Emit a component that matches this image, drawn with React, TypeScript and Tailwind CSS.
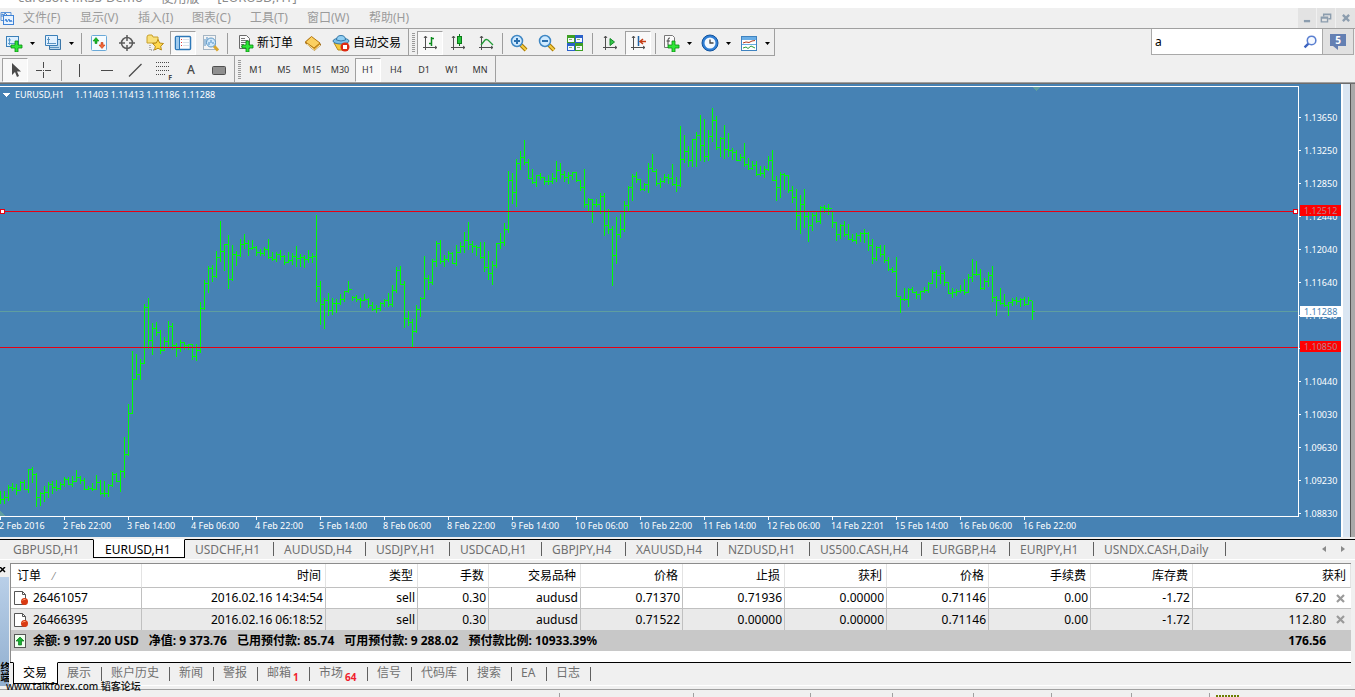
import type { ReactNode } from 'react';
import clsx from 'clsx';

// high, low, close of every bar, as y positions counted from the top of the window
const bars = `491,504,499 491,504,497 485,501,487 483,491,488 484,495,490 481,491,482 480,490,489 469,493,469 467,483,474 473,507,497
492,506,493 486,502,492 482,498,484 481,494,487 480,491,488 482,490,484 477,487,479 477,485,484 476,487,481 470,482,477
476,484,480 478,490,489 486,490,488 483,491,489 475,490,482 480,495,493 481,497,493 484,497,485 472,487,474 473,482,481
470,492,471 437,478,454 404,456,413 351,414,379 354,380,374 359,380,363 304,364,307 298,349,340 323,355,328 322,336,332
330,354,350 337,351,341 321,347,326 323,350,345 343,357,348 340,352,342 342,350,345 344,350,344 344,360,356 344,361,350
302,353,308 280,310,283 266,293,268 265,282,276 251,278,257 221,262,251 244,271,244 235,289,279 245,281,254 251,266,255
239,257,244 234,249,243 240,256,248 240,250,247 246,256,252 249,256,253 247,256,249 239,259,257 252,261,259 252,262,254
250,260,256 255,265,262 252,263,260 253,265,256 246,267,258 254,267,257 255,268,259 250,263,257 253,263,256 215,302,286
281,325,304 298,329,300 293,316,310 298,315,303 299,313,303 294,305,299 291,302,291 281,293,289 296,301,297 295,302,299
298,308,300 294,301,299 298,308,305 302,311,309 305,313,308 302,311,303 299,307,300 293,307,304 285,307,290 267,293,270
266,285,284 281,328,318 311,326,322 319,347,331 305,333,309 297,317,298 256,299,278 275,290,282 259,285,261 241,267,243
240,264,261 255,267,259 251,262,253 252,264,263 245,266,252 242,253,246 232,253,240 222,250,244 241,253,246 245,256,247
242,259,257 242,272,267 251,280,273 261,285,265 243,268,243 233,249,242 223,246,229 171,233,180 173,204,192 159,207,163
151,170,157 140,165,162 159,179,178 169,184,182 175,187,175 173,180,177 177,185,181 175,185,181 173,184,178 161,182,170
163,179,174 171,182,177 172,184,175 172,180,172 172,182,180 180,191,187 169,208,204 198,211,199 199,223,204 199,207,204
193,214,196 193,236,225 209,234,229 226,286,255 217,264,234 214,238,229 201,232,205 186,211,187 174,201,176 172,183,179
179,191,189 183,191,184 163,193,168 154,172,171 169,186,183 178,188,181 174,183,177 174,184,178 164,186,184 177,192,185
126,187,159 135,163,151 146,167,160 139,167,139 132,167,135 115,161,145 119,162,156 130,161,136 108,142,120 116,150,147
137,157,138 125,159,149 133,157,150 148,160,152 150,161,160 154,161,157 143,167,164 158,170,168 161,170,165 161,176,174
166,176,173 166,178,169 156,171,160 150,181,180 176,201,187 172,198,174 173,190,175 175,193,190 186,203,197 189,230,215
195,234,204 189,228,216 211,242,225 213,231,215 212,223,221 206,224,207 205,213,208 204,215,208 212,228,222 222,241,234
224,239,225 221,237,234 224,240,239 234,242,240 233,244,235 232,242,233 229,243,233 232,251,245 239,264,258 246,261,247
245,257,254 245,263,260 257,271,269 267,273,271 257,297,296 296,313,299 288,301,299 288,307,289 287,293,292 291,299,294
291,300,291 287,293,290 282,293,283 270,284,272 270,288,275 266,284,273 271,286,282 282,294,293 288,298,292 289,296,291
285,293,290 279,295,292 274,293,277 259,282,274 261,276,274 269,290,288 278,290,281 272,287,275 266,302,297 296,316,300
288,305,303 294,307,305 302,316,302 298,306,300 297,305,301 298,307,299 297,306,304 297,305,300 301,320,311`
  .split(/\s+/)
  .map((b) => b.split(',').map(Number));

const barPath = bars
  .map(([high, low, close], i) => {
    const x = i * 4;
    const open = i > 0 ? bars[i - 1][2] : close;
    return `M${x} ${high}h1V${low}h-1zM${x + 1} ${close}h2v1h-2zM${x - 1} ${open}h1v1h-1z`;
  })
  .join('');

const dates = [
  '2 Feb 2016', '2 Feb 22:00', '3 Feb 14:00', '4 Feb 06:00', '4 Feb 22:00', '5 Feb 14:00',
  '8 Feb 06:00', '8 Feb 22:00', '9 Feb 14:00', '10 Feb 06:00', '10 Feb 22:00', '11 Feb 14:00',
  '12 Feb 06:00', '14 Feb 22:01', '15 Feb 14:00', '16 Feb 06:00', '16 Feb 22:00',
];

const prices = [
  '1.13650', '1.13250', '1.12850', '1.12440', '1.12040', '1.11640', '1.11240',
  '', '1.10440', '1.10030', '1.09630', '1.09230', '1.08830',
];

const menus = ['文件(F)', '显示(V)', '插入(I)', '图表(C)', '工具(T)', '窗口(W)', '帮助(H)'];
const menuWidths = ['w-[57px]', 'w-[58px]', 'w-[54px]', 'w-[58px]', 'w-[57px]', 'w-[62px]', 'w-[60px]'];
const periods = ['M1', 'M5', 'M15', 'M30', 'H1', 'H4', 'D1', 'W1', 'MN'];

const chartTabs = [
  ['GBPUSD,H1', 'w-[93px]'],
  ['EURUSD,H1', 'w-[92px]'],
  ['USDCHF,H1', 'w-[89px]'],
  ['AUDUSD,H4', 'w-[92px]'],
  ['USDJPY,H1', 'w-[84px]'],
  ['USDCAD,H1', 'w-[92px]'],
  ['GBPJPY,H4', 'w-[84px]'],
  ['XAUUSD,H4', 'w-[92px]'],
  ['NZDUSD,H1', 'w-[92px]'],
  ['US500.CASH,H4', 'w-[112px]'],
  ['EURGBP,H4', 'w-[88px]'],
  ['EURJPY,H1', 'w-[84px]'],
  ['USNDX.CASH,Daily', 'w-[132px]'],
];

const terminalTabs: [string, string, string?][] = [
  ['交易', 'w-[45px]'],
  ['展示', 'w-[44px]'],
  ['账户历史', 'w-[68px]'],
  ['新闻', 'w-[44px]'],
  ['警报', 'w-[44px]'],
  ['邮箱', 'w-[52px]', '1'],
  ['市场', 'w-[58px]', '64'],
  ['信号', 'w-[44px]'],
  ['代码库', 'w-[56px]'],
  ['搜索', 'w-[44px]'],
  ['EA', 'w-[35px]'],
  ['日志', 'w-[44px]'],
];

const columns = [
  ['订单', 'w-[131px]'],
  ['时间', 'w-[184px]'],
  ['类型', 'w-[92px]'],
  ['手数', 'w-[71px]'],
  ['交易品种', 'w-[92px]'],
  ['价格', 'w-[102px]'],
  ['止损', 'w-[102px]'],
  ['获利', 'w-[102px]'],
  ['价格', 'w-[102px]'],
  ['手续费', 'w-[102px]'],
  ['库存费', 'w-[102px]'],
  ['获利', ''],
];

const orders = [
  ['26461057', '2016.02.16 14:34:54', 'sell', '0.30', 'audusd', '0.71370', '0.71936', '0.00000', '0.71146', '0.00', '-1.72', '67.20'],
  ['26466395', '2016.02.16 06:18:52', 'sell', '0.30', 'audusd', '0.71522', '0.00000', '0.00000', '0.71146', '0.00', '-1.72', '112.80'],
];

const statusCells = ['w-[560px]', 'w-[134px]', 'w-[117px]', 'w-[82px]', 'w-[81px]', 'w-[78px]', 'w-[80px]', 'w-[78px]'];

const pressed = 'border border-[#a0a0a0] border-r-white border-b-white bg-[#f8f8f8]';

function Svg({ children, size = 18 }: { children: ReactNode; size?: number }) {
  return (
    <svg width={size} height={size} viewBox="0 0 18 18" fill="none" className="shrink-0" aria-hidden="true">
      {children}
    </svg>
  );
}

function ToolButton({ label, active, children }: { label: string; active?: boolean; children: ReactNode }) {
  return (
    <button type="button" aria-label={label} className="flex h-6 w-7 shrink-0 items-center justify-center">
      <span className={clsx('flex h-6 w-[26px] items-center justify-center', active && pressed)}>{children}</span>
    </button>
  );
}

function DropButton({ label, children }: { label: string; children: ReactNode }) {
  return (
    <button type="button" aria-label={label} className="flex h-6 shrink-0 items-center">
      <span className="flex w-6 justify-center">{children}</span>
      <span className="flex w-3 justify-center">
        <svg width="5" height="3" viewBox="0 0 5 3"><path d="M0 0h5L2.5 3z" fill="#000" /></svg>
      </span>
    </button>
  );
}

function Separator({ narrow }: { narrow?: boolean }) {
  return <div className={clsx('h-[21px] w-px shrink-0 bg-[#9d9d9d]', narrow ? 'mx-[2px]' : 'mx-[3px]')} />;
}

function Grip() {
  return (
    <svg width="3" height="20" className="shrink-0" aria-hidden="true">
      {[0, 2, 4, 6, 8, 10, 12, 14, 16, 18].map((y) => (
        <rect key={y} y={y} width="3" height="1" fill="#9a9a9a" />
      ))}
    </svg>
  );
}

const axes = <path d="M4.5 2v14M2 13.5h14M3 4l1.5-2L6 4M14 12l2 1.500-2 1.500" stroke="#4f4f4f" />;
const plus = <path d="M10 7h3v4h4v3h-4v4h-3v-4H6v-3h4z" fill="#2fe637" stroke="#078a10" strokeWidth=".8" />;

function Lens({ sign }: { sign: string }) {
  return (
    <Svg>
      <path d="M11 11l5 5" stroke="#a97900" strokeWidth="4" />
      <path d="M11 11l5 5" stroke="#f6cf45" strokeWidth="2" />
      <circle cx="7" cy="7" r="5.500" fill="#cfeaff" stroke="#3f87c4" strokeWidth="1.500" />
      <path d={sign} stroke="#2a6fae" strokeWidth="2" />
    </Svg>
  );
}

function MenuBar() {
  return (
    <header>
      <div className="flex h-2 items-end overflow-hidden bg-white pb-1 pl-[18px] text-[13px] leading-[13px] text-[#8a8a8a]">
        <h1 className="whitespace-pre">curosoft4.RSS-Demo  -  使用版  -  [EURUSD,H1]</h1>
      </div>
      <div className="flex h-5 items-center">
        <svg width="15" height="15" viewBox="0 0 15 15" fill="none" className="mr-2 shrink-0" aria-hidden="true">
          <path d="M1 1.500h10v3M1 1.500v8h2" stroke="#5b93d8" />
          <rect x="3.500" y="4.500" width="10" height="9" fill="#e8f3ff" stroke="#3f83d6" />
          <path d="M2 6V3l2 1 1-2 2 2M5 10l1-2 1 3 2-3 1 3 1-2 1 2" stroke="#3f83d6" />
        </svg>
        <nav className="flex flex-1">
          {menus.map((menu, i) => (
            <button key={menu} type="button" className={clsx('h-5 text-left text-[12px] leading-5 text-[#9b9b9b]', menuWidths[i])}>
              {menu}
            </button>
          ))}
        </nav>
        <div className="flex gap-px">
          <button type="button" aria-label="最小化" className="flex h-5 w-[18px] items-center justify-center bg-[#e3e3e3]">
            <Svg size={14}><path d="M5 13h8" stroke="#8c9dae" strokeWidth="3" /></Svg>
          </button>
          <button type="button" aria-label="还原" className="flex h-5 w-[18px] items-center justify-center bg-[#e3e3e3]">
            <Svg size={14}>
              <path d="M6 7V4h9v6h-3M6 4.500h9" stroke="#8c9dae" strokeWidth="1.800" />
              <path d="M3 8h8v6H3zM3 9h8" stroke="#8c9dae" strokeWidth="1.800" />
            </Svg>
          </button>
          <button type="button" aria-label="关闭" className="flex h-5 w-[19px] items-center justify-center bg-[#e3e3e3]">
            <Svg size={14}><path d="M5 5l8 8M13 5l-8 8" stroke="#8c9dae" strokeWidth="3" /></Svg>
          </button>
        </div>
      </div>
    </header>
  );
}

function MainToolbar() {
  return (
    <div className="flex h-7 items-start border-t border-[#a0a0a0]">
      <div className="flex h-[27px] items-center border-r border-b border-[#a0a0a0] pt-[2px] pr-[2px] pl-[2px]">
        <div className="mr-px flex gap-[3px]">
          <DropButton label="新图表">
            <Svg>
              <rect x="1.500" y="2.500" width="12" height="10" fill="#dcefff" stroke="#3b7fb8" />
              <path d="M4.500 4v7M3 6h3M3 9.500h9" stroke="#5b9bcc" />
              {plus}
            </Svg>
          </DropButton>
          <DropButton label="图表组合">
            <Svg>
              <path d="M5.500 5.500h11v10h-11z" fill="#bcd9ef" stroke="#3b76a8" />
              <path d="M1.500 1.500h12v10h-12z" fill="#e2f1ff" stroke="#3b7fb8" />
              <path d="M4.500 3v6M3 9.500h9M3 5.500h3M6 13.500h9" stroke="#5b93c0" />
            </Svg>
          </DropButton>
        </div>
        <Separator />
        <ToolButton label="市场报价">
          <Svg>
            <rect x="1.500" y="1.500" width="15" height="15" rx="1" fill="#f5fbff" stroke="#6aa9d8" />
            <path d="M7 9.500V7h2L6 3.500 3 7h2v2.500z" fill="#18b827" stroke="#0b8b18" strokeWidth=".6" />
            <path d="M11 8.500V11H9l3 3.500L15 11h-2V8.500z" fill="#f0693a" stroke="#c9380b" strokeWidth=".6" />
          </Svg>
        </ToolButton>
        <ToolButton label="数据窗口">
          <Svg>
            <circle cx="9" cy="9" r="5.500" stroke="#5a5a5a" strokeWidth="1.500" />
            <path d="M9 1v6M9 11v6M1 9h6M11 9h6" stroke="#5a5a5a" strokeWidth="1.500" />
          </Svg>
        </ToolButton>
        <ToolButton label="导航">
          <Svg>
            <path d="M1 3q0-2 2-2h3l1 2h5v6H1z" fill="#f9e07a" stroke="#c8a02c" />
            <path d="M4 11v5h4" stroke="#777" strokeDasharray="1 1" />
            <path d="M12 5.500l1.700 3.500 3.800.5-2.800 2.700.7 3.800-3.400-1.800L8.600 16l.7-3.800-2.800-2.700 3.800-.5z" fill="#ffd94e" stroke="#b98b16" />
          </Svg>
        </ToolButton>
        <ToolButton label="终端" active>
          <Svg>
            <rect x="1.500" y="2.500" width="15" height="13" rx="1" fill="#fff" stroke="#2e78b8" strokeWidth="1.500" />
            <path d="M2 3h3v12H2z" fill="#9fcbee" />
            <path d="M5.500 3v12" stroke="#2e78b8" />
            <path d="M7 5.500h1M7 8.500h1M7 11.500h1" stroke="#e03c3c" />
            <path d="M9 5.500h6M9 8.500h6M9 11.500h6" stroke="#d8e2ea" />
          </Svg>
        </ToolButton>
        <ToolButton label="策略测试">
          <Svg>
            <rect x="1.500" y="1.500" width="12" height="14" fill="#f4f4f4" stroke="#a5b5c3" />
            <path d="M3 5v7M5 3v7M7 5v7" stroke="#4c8dc5" />
            <path d="M12 12l4 4.500" stroke="#d8a62e" strokeWidth="3" />
            <circle cx="9" cy="8.500" r="4.500" fill="#cfe8fb" stroke="#5d97c4" />
            <path d="M7 8v3M9 6v3M11 8v2" stroke="#4c8dc5" />
          </Svg>
        </ToolButton>
        <Separator narrow />
        <button type="button" className="flex h-6 w-[69px] shrink-0 items-center pl-[3px] text-[12px] leading-6 whitespace-nowrap">
          <span className="flex w-6 shrink-0 justify-center">
            <Svg>
              <path d="M3.500 1.500h7l3 3v10h-10z" fill="#fafafa" stroke="#6a6a6a" />
              <path d="M5 4.500h4M5 6.500h7M5 8.500h6M5 10.500h3M5 12.500h2" stroke="#777" />
              {plus}
            </Svg>
          </span>
          新订单
        </button>
        <ToolButton label="元编辑器">
          <Svg>
            <path d="M1 8.500L7 3l10 7.500-6.500 6z" fill="#d9971e" stroke="#9a6410" />
            <path d="M1.500 8L7.500 2.500 16 9l-6 5z" fill="#fbd060" stroke="#b67a15" />
            <path d="M3 10l7.500 6 5.500-5" stroke="#fff0b0" />
          </Svg>
        </ToolButton>
        <button type="button" className="flex h-6 w-[78px] shrink-0 items-center pl-[2px] text-[12px] leading-6 whitespace-nowrap">
          <span className="flex w-6 shrink-0 justify-center">
            <Svg>
              <path d="M2 9l4 7h6l4-7z" fill="#f6cb3c" stroke="#b88c18" />
              <ellipse cx="9" cy="7" rx="8" ry="3" fill="#79bfe8" stroke="#3679a8" />
              <path d="M4.500 6q0-4.500 4.500-4.500T13.500 6q-4.500 2-9 0z" fill="#91cff3" stroke="#3679a8" />
              <circle cx="13" cy="13" r="4.500" fill="#dd2a12" />
              <path d="M11 11h4v4h-4z" fill="#fff" />
            </Svg>
          </span>
          自动交易
        </button>
        <div className="w-px" />
      </div>
      <div className="flex h-[27px] items-center border-r border-b border-[#a0a0a0] pt-[2px] pr-px pl-[3px]">
        <Grip />
        <div className="w-px" />
        <ToolButton label="柱状图" active>
          <Svg>{axes}<path d="M10.500 3v9M8 9.500h2.500M10.500 4.500H13" stroke="#0b8a1c" strokeWidth="1.500" /></Svg>
        </ToolButton>
        <ToolButton label="阴阳烛">
          <Svg>{axes}<path d="M10.500 0v12" stroke="#0b7a18" /><rect x="8.500" y="2.500" width="4" height="7" fill="#25c53b" stroke="#0b7a18" /></Svg>
        </ToolButton>
        <ToolButton label="折线图">
          <Svg>{axes}<path d="M4 11l4-5q1-1 3 0l5 5" stroke="#219b36" strokeWidth="1.300" /></Svg>
        </ToolButton>
        <Separator narrow />
        <ToolButton label="放大"><Lens sign="M4 7h6M7 4v6" /></ToolButton>
        <ToolButton label="缩小"><Lens sign="M4 7h6" /></ToolButton>
        <ToolButton label="平铺窗口">
          <Svg>
            <path d="M1 1h8v8H1zM9 9h8v8H9z" fill="#3d9f24" />
            <path d="M9 1h8v8H9zM1 9h8v8H1z" fill="#2b61c9" />
            <path d="M2 4h6v4H2zM10 4h6v4h-6zM2 12h6v4H2zM10 12h6v4h-6z" fill="#f4f8ff" />
            <path d="M3 5.500h3M11 5.500h3M3 13.500h3M11 13.500h3" stroke="#8bb46f" />
          </Svg>
        </ToolButton>
        <Separator />
        <ToolButton label="自动滚动">
          <Svg>{axes}<path d="M9 4.500v7l4.500-3.500z" fill="#35c54b" stroke="#118a24" /></Svg>
        </ToolButton>
        <ToolButton label="图表平移" active>
          <Svg>{axes}<path d="M9.500 2v10" stroke="#2165a8" strokeWidth="1.500" /><path d="M11 7.500h6M14 5l-3 2.500 3 2.500" stroke="#c53a12" strokeWidth="1.500" /></Svg>
        </ToolButton>
        <Separator />
        <div className="flex gap-[3px]">
          <DropButton label="技术指标">
            <Svg>
              <path d="M2.500 1.500h8l2 2v10h-10z" fill="#fafafa" stroke="#777" />
              <path d="M8 4q-2-.5-2 2v5M4.500 7H8" stroke="#444" />
              {plus}
            </Svg>
          </DropButton>
          <DropButton label="周期">
            <Svg>
              <circle cx="9" cy="9" r="8" fill="#2f7fd6" stroke="#12539c" />
              <circle cx="9" cy="9" r="5.500" fill="#f3f9ff" />
              <path d="M9 5.500V9h3.500" stroke="#444" strokeWidth="1.300" />
            </Svg>
          </DropButton>
          <DropButton label="模板">
            <Svg>
              <rect x="1.500" y="2.500" width="15" height="14" fill="#fff" stroke="#3f83c0" />
              <path d="M2 3h14v3H2zM2 10h14v1H2z" fill="#6aaee6" />
              <path d="M3 9l3-1 3 .5 3-1.500 3-.5" stroke="#b33a1c" />
              <path d="M3 14l3-1 2 1.500 3-2.500 4 2" stroke="#2a9c3c" />
            </Svg>
          </DropButton>
        </div>
      </div>
      <div className="flex-1" />
      <div className="mr-px flex h-[26px] border-b border-l border-[#a9a9a9]">
        <label className="flex w-[170px] items-center bg-white pr-[5px]">
          <input type="text" defaultValue="a" aria-label="搜索" className="w-full min-w-0 bg-transparent pl-[3px] text-[12px] leading-5 text-black outline-none" />
          <Svg size={14}>
            <path d="M7 11l-5 5" stroke="#3b63c0" strokeWidth="3" />
            <circle cx="11" cy="7" r="5.500" fill="#f5f9ff" stroke="#5a7fd0" strokeWidth="2" />
          </Svg>
        </label>
        <button type="button" aria-label="消息" className="flex w-8 items-center justify-center border-x border-[#a9a9a9] bg-[#e1e1e1] pb-1">
          <span className="relative flex h-3 w-4 justify-center bg-[#6480b3] text-[10px] leading-3 font-bold text-white">
            5
            <svg width="5" height="4" viewBox="0 0 5 4" className="absolute top-3 left-[3px]"><path d="M0 0h5v4z" fill="#6480b3" /></svg>
          </span>
        </button>
      </div>
    </div>
  );
}

function DrawToolbar() {
  return (
    <div className="flex h-[27px] border-b border-[#a0a0a0]">
      <div className="flex items-center border-r border-[#a0a0a0] pt-[2px] pr-px pl-px">
        <ToolButton label="光标" active>
          <Svg><path d="M6 2v12l3-3 2 5 2-1-2-4.500h4z" fill="#4a4a4a" /></Svg>
        </ToolButton>
        <ToolButton label="十字准线">
          <Svg><path d="M9.500 1v6M9.500 11v6M2 9.500h6M11 9.500h6M9 9.500h1" stroke="#4a4a4a" /></Svg>
        </ToolButton>
        <div className="ml-px flex"><Separator /></div>
        <ToolButton label="垂直线"><Svg><path d="M9.500 3v13" stroke="#4a4a4a" /></Svg></ToolButton>
        <ToolButton label="水平线"><Svg><path d="M3 9.500h12" stroke="#4a4a4a" /></Svg></ToolButton>
        <ToolButton label="趋势线"><Svg><path d="M3 15.500L15.500 3" stroke="#4a4a4a" strokeWidth="1.300" /></Svg></ToolButton>
        <ToolButton label="斐波纳契回调线">
          <span className="relative">
            <Svg><path d="M2 1.500h14M2 5.500h14M2 9.500h14M2 13.500h9" stroke="#4a4a4a" strokeDasharray="1 1" /></Svg>
            <span className="absolute right-0 bottom-[-2px] text-[7px] leading-[7px] font-bold text-[#4a4a4a]">F</span>
          </span>
        </ToolButton>
        <ToolButton label="文字"><span className="text-[12px] leading-4 font-medium text-[#4a4a4a]">A</span></ToolButton>
        <ToolButton label="矩形">
          <Svg><rect x="2.500" y="5.500" width="13" height="8" rx="1" fill="#8f8f8f" stroke="#4f4f4f" /></Svg>
        </ToolButton>
      </div>
      <div className="flex items-center border-r border-[#a0a0a0] pt-[2px] pr-px pl-[3px]">
        <Grip />
        <div className="w-px" />
        {periods.map((p) => (
          <button key={p} type="button" className="flex h-6 w-7 shrink-0 items-center justify-center text-[9px] leading-3 text-[#333]">
            <span className={clsx('flex h-6 w-[26px] items-center justify-center', p === 'H1' && pressed)}>{p}</span>
          </button>
        ))}
      </div>
    </div>
  );
}

function Chart() {
  return (
    <main className="flex border-t border-[#6d6d6d] bg-[#4682b4]">
      <div className="min-w-0 flex-1">
        <svg width="100%" height="453" className="block" shapeRendering="crispEdges" role="img" aria-label="EURUSD,H1">
          <g transform="translate(0 -84)">
            <path d="M0 511l6 6H0zM1032 87h9l-4.500 4z" fill="#5f9ea0" />
            <rect y="311" width="100%" height="1" fill="#5f9ea0" />
            <path d={barPath} fill="#00ff00" />
            <rect y="211" width="100%" height="1" fill="#e60012" />
            <rect y="347" width="100%" height="1" fill="#e60012" />
            <rect x=".5" y="209.500" width="4" height="4" fill="#fff" stroke="#e60012" />
            <svg x="100%" overflow="visible">
              <rect x="-4.500" y="209.500" width="4" height="4" fill="#fff" stroke="#e60012" />
            </svg>
            <rect y="86" width="100%" height="1" fill="#fff" />
            <rect y="516" width="100%" height="1" fill="#fff" />
            <path d="M3 93h7l-3.500 4z" fill="#fff" />
            <text x="15" y="98" className="fill-white text-[9px]">EURUSD,H1</text>
            <text x="75" y="98" className="fill-white text-[9px]">1.11403 1.11413 1.11186 1.11288</text>
            {dates.map((d, i) => (
              <g key={d}>
                <rect x={i * 64} y="517" width="1" height="3" fill="#fff" />
                <text x={i * 64 - 1} y="529" className="fill-white text-[9px]">{d}</text>
              </g>
            ))}
          </g>
        </svg>
      </div>
      <svg width="43" height="453" className="block shrink-0" shapeRendering="crispEdges" aria-label="价格">
        <g transform="translate(0 -84)">
          <rect y="86" width="1" height="431" fill="#fff" />
          {prices.map((p, i) => (
            <g key={i}>
              <rect x="1" y={117 + i * 33} width="2" height="1" fill="#fff" />
              {p && <text x="6" y={121 + i * 33} className="fill-white text-[9px]">{p}</text>}
            </g>
          ))}
          <rect x="2" y="205" width="41" height="11" fill="#f00" />
          <text x="6" y="214" className="fill-[#b9808c] text-[9px]">1.12512</text>
          <rect x="2" y="306" width="41" height="11" fill="#fff" />
          <text x="6" y="315" className="fill-[#4682b4] text-[9px]">1.11288</text>
          <rect x="2" y="341" width="41" height="11" fill="#f00" />
          <text x="6" y="350" className="fill-[#b9808c] text-[9px]">1.10850</text>
        </g>
      </svg>
      <div className="w-[9px] border-l-2 border-white bg-[#dae6f2]" />
      <div className="w-[5px] border-l border-[#555] bg-[#a9a9a9]" />
    </main>
  );
}

function ChartTabs() {
  return (
    <div className="mt-[2px] flex h-[21px] items-start border-b border-white">
      {chartTabs.map(([name, width], i) => (
        <button
          key={name}
          type="button"
          className={clsx(
            'h-[19px] shrink-0 border-t border-black text-left text-[12px] leading-[19px] whitespace-nowrap',
            width,
            i === 0 ? 'pl-[13px]' : i === 1 ? 'pl-[11px]' : 'pl-[10px]',
            i === 1 ? 'border-x border-b border-t-white bg-white text-black' : 'text-[#707070]',
          )}
        >
          <span className="flex h-[19px] items-start">
            <span className="flex-1">{name}</span>
            {i > 1 && <span className="mt-[2px] h-[14px] w-px bg-[#606060]" />}
          </span>
        </button>
      ))}
      <div className="flex h-[19px] flex-1 items-center justify-end gap-[15px] border-t border-black pr-[10px]">
        <button type="button" aria-label="向左"><svg width="4" height="6" viewBox="0 0 4 6" className="block"><path d="M4 0v6L0 3z" fill="#8a8a8a" /></svg></button>
        <button type="button" aria-label="向右"><svg width="4" height="6" viewBox="0 0 4 6" className="block"><path d="M0 0v6l4-3z" fill="#8a8a8a" /></svg></button>
      </div>
    </div>
  );
}

function OrderIcon() {
  return (
    <svg width="14" height="16" viewBox="0 0 14 16" fill="none" className="shrink-0" aria-hidden="true">
      <path d="M.5 1.500h8l3 3v10H.5z" fill="#fff" stroke="#555" />
      <path d="M8.500 1.500v3h3" stroke="#555" />
      <circle cx="10.500" cy="11.500" r="3.500" fill="#d93a12" />
      <path d="M8.500 10.500q1-1.500 3-1" stroke="#ff9a6b" />
    </svg>
  );
}

function Orders() {
  return (
    <table className="w-full table-fixed border-separate border-spacing-0 bg-white text-[12px] leading-5 text-black">
      <colgroup>
        {columns.map(([, width], i) => <col key={i} className={width} />)}
      </colgroup>
      <thead>
        <tr>
          {columns.map(([name], i) => (
            <th
              key={i}
              scope="col"
              className={clsx(
                'h-6 border-r border-b border-[#e3e3e3] border-b-[#c0c0c0] p-0 font-normal',
                i === 0 ? 'pl-[6px] text-left' : 'pr-1 text-right',
              )}
            >
              {name}
              {i === 0 && <span className="pl-3 text-[10px] text-[#808080]">⁄</span>}
            </th>
          ))}
        </tr>
      </thead>
      <tbody>
        {orders.map((row, r) => (
          <tr key={row[0]} className={clsx(r === 1 && 'bg-[#eaeaea]')}>
            {row.map((value, i) => (
              <td
                key={i}
                className={clsx(
                  'h-[21px] p-0',
                  r === 0 && 'border-b border-b-[#c0c0c0]',
                  i < 11 && 'border-r border-r-[#c0c0c0]',
                  i > 0 && i < 11 && 'pr-[2px] text-right',
                )}
              >
                {i === 0 && <span className="flex items-center gap-[5px] pl-[3px]"><OrderIcon />{value}</span>}
                {i > 0 && i < 11 && value}
                {i === 11 && (
                  <span className="flex items-center justify-end gap-[10px] pr-[6px]">
                    {value}
                    <button type="button" aria-label="平仓">
                      <svg width="9" height="9" viewBox="0 0 9 9" className="block"><path d="M1 1l7 7M8 1L1 8" stroke="#9a9a9a" strokeWidth="2.200" /></svg>
                    </button>
                  </span>
                )}
              </td>
            ))}
          </tr>
        ))}
      </tbody>
      <tfoot>
        <tr className="bg-[#c8c8c8] font-bold">
          <td colSpan={11} className="h-[21px] p-0">
            <div className="flex items-center gap-[10px] pl-[3px] whitespace-nowrap">
              <svg width="12" height="14" viewBox="0 0 12 14" fill="none" className="mr-[-3px] shrink-0" aria-hidden="true">
                <rect x=".5" y=".5" width="11" height="13" fill="#f0fff0" stroke="#555" />
                <path d="M6 3l4 4H7.500v4h-3V7H2z" fill="#18b030" stroke="#08721a" strokeWidth=".7" />
              </svg>
              <span>余额: 9 197.20 USD</span>
              <span>净值: 9 373.76</span>
              <span>已用预付款: 85.74</span>
              <span>可用预付款: 9 288.02</span>
              <span>预付款比例: 10933.39%</span>
            </div>
          </td>
          <td className="p-0 pr-[25px] text-right">176.56</td>
        </tr>
      </tfoot>
    </table>
  );
}

function Terminal() {
  return (
    <section className="relative mt-[3px] flex">
      <div className="flex w-[10px] shrink-0 flex-col">
        <button type="button" aria-label="关闭" className="h-[14px]">
          <svg width="6" height="6" viewBox="0 0 6 6" className="block"><path d="M0 0l5 5M5 0L0 5" stroke="#000" strokeWidth="1.500" /></svg>
        </button>
        <div className="flex w-[9px] flex-1 items-end overflow-hidden bg-linear-to-b from-[#b9cfe8] to-[#91afcf]">
          <span className="mb-1 text-[10px] leading-[9px] font-bold text-black [writing-mode:vertical-rl]">终端</span>
        </div>
      </div>
      <div className="mr-1 min-w-0 flex-1">
        <div className="border-t border-l border-[#8c8c8c] bg-white pb-[11px]">
          <Orders />
        </div>
        <div className="flex h-[24px] items-start border-b border-white">
          <div className="h-px w-[3px] bg-black" />
          {terminalTabs.map(([name, width, badge], i) => (
            <button
              key={name}
              type="button"
              className={clsx(
                'flex h-[22px] shrink-0 items-start border-t border-black pl-[9px] text-left text-[12px] leading-[20px] whitespace-nowrap',
                width,
                i === 0 ? 'border-x border-b border-t-white bg-white text-black' : 'text-[#707070]',
              )}
            >
              <span>{name}</span>
              {badge && <span className="pt-[5px] pl-[2px] text-[10px] leading-[18px] font-bold text-[#f0202c]">{badge}</span>}
              {i > 0 && <span className="mt-1 ml-auto h-[14px] w-px bg-[#606060]" />}
            </button>
          ))}
          <div className="h-px flex-1 bg-black" />
        </div>
      </div>
      <p className="absolute bottom-[-8px] left-[6px] text-[10px] leading-4 font-medium whitespace-nowrap text-[#111]">www.talkforex.com 韬客论坛</p>
    </section>
  );
}

export default function App() {
  return (
    <div className="overflow-hidden bg-[#f0f0f0] font-['Noto_Sans','Noto_Sans_CJK_SC',sans-serif] text-black">
      <MenuBar />
      <MainToolbar />
      <DrawToolbar />
      <Chart />
      <ChartTabs />
      <Terminal />
      <footer className="mt-[3px] flex h-2 items-end overflow-hidden border-t border-[#a0a0a0]">
        {statusCells.map((width, i) => (
          <div key={i} className={clsx('h-1 shrink-0 border-r border-[#a0a0a0]', width)} />
        ))}
        <svg width="24" height="2" className="ml-[6px]" aria-hidden="true">
          <path d="M0 1h24" stroke="#6b7d00" strokeWidth="2" strokeDasharray="2 1" />
        </svg>
      </footer>
    </div>
  );
}
